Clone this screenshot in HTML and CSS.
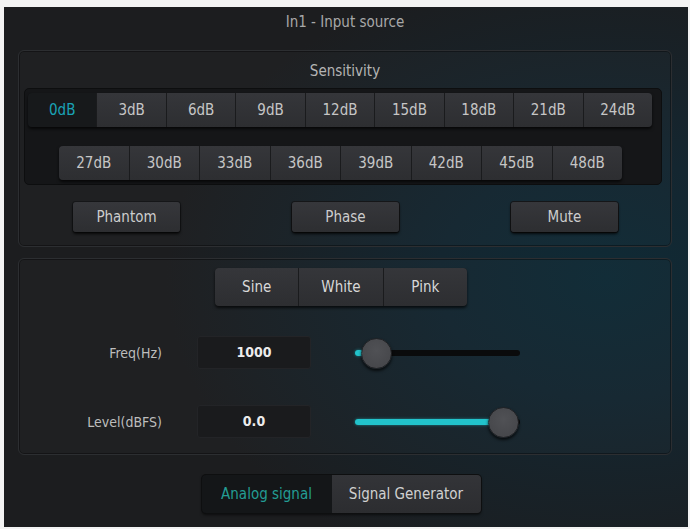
FILE: index.html
```html
<!DOCTYPE html>
<html>
<head>
<meta charset="utf-8">
<link rel="stylesheet" href="styles.css">
</head>
<body>
<div class="panel">
  <div class="title">In1 - Input source</div>
  <div class="group group-top">
    <div class="group-label">Sensitivity</div>
    <div class="sens-box">
      <div class="seg seg-row1">
        <div class="btn sel">0dB</div><div class="btn">3dB</div><div class="btn">6dB</div><div class="btn">9dB</div><div class="btn">12dB</div><div class="btn">15dB</div><div class="btn">18dB</div><div class="btn">21dB</div><div class="btn">24dB</div>
      </div>
      <div class="seg seg-row2">
        <div class="btn">27dB</div><div class="btn">30dB</div><div class="btn">33dB</div><div class="btn">36dB</div><div class="btn">39dB</div><div class="btn">42dB</div><div class="btn">45dB</div><div class="btn">48dB</div>
      </div>
    </div>
    <div class="toggles">
      <div class="tbtn">Phantom</div>
      <div class="tbtn">Phase</div>
      <div class="tbtn">Mute</div>
    </div>
  </div>
  <div class="group group-gen">
    <div class="seg seg-wave">
      <div class="btn wave">Sine</div><div class="btn wave">White</div><div class="btn wave">Pink</div>
    </div>
    <div class="param-row row-freq">
      <div class="plabel">Freq(Hz)</div>
      <div class="pinput">1000</div>
      <div class="slider">
        <div class="fill" style="width:8px"></div>
        <div class="knob" style="left:6px"></div>
      </div>
    </div>
    <div class="param-row row-level">
      <div class="plabel">Level(dBFS)</div>
      <div class="pinput">0.0</div>
      <div class="slider">
        <div class="fill" style="width:146px"></div>
        <div class="knob" style="left:133px"></div>
      </div>
    </div>
  </div>
  <div class="tabs">
    <div class="tab active">Analog signal</div>
    <div class="tab">Signal Generator</div>
  </div>
</div>
</body>
</html>
```
FILE: styles.css
```css
html, body {
  margin: 0;
  padding: 0;
  background: #f3f3f3;
}
body {
  width: 690px;
  height: 529px;
  overflow: hidden;
  font-family: "DejaVu Sans Condensed", "Liberation Sans Narrow", "Liberation Sans", sans-serif;
  font-size: 15px;
  color: #cfcfcf;
}
.panel {
  margin: 7px 0 0 4px;
  width: 684px;
  height: 520px;
  box-sizing: border-box;
  padding: 0 16px 0 14px;
  display: flex;
  flex-direction: column;
  background:
    radial-gradient(ellipse 440px 320px at 88% 52%, #0f2a35 0%, #142630 38%, rgba(28,30,32,0) 100%),
    #1c1d1f;
}
.title {
  height: 43px;
  line-height: 30px;
  text-align: center;
  color: #a8a8a8;
  font-size: 15px;
}
.group {
  border: 1px solid #2c2e31;
  border-radius: 6px;
  background: rgba(255,255,255,0.015);
  box-shadow: inset 0 0 0 1px rgba(0,0,0,0.35);
}
.group-top {
  height: 197px;
  box-sizing: border-box;
  display: flex;
  flex-direction: column;
}
.group-label {
  height: 37px;
  line-height: 40px;
  text-align: center;
  color: #b4b4b4;
  font-size: 15px;
}
.sens-box {
  margin: 0 9px 0 5px;
  height: 97px;
  box-sizing: border-box;
  padding: 4px 0 0 3px;
  background: #151618;
  border: 1px solid #0d0e0f;
  border-radius: 5px;
  display: flex;
  flex-direction: column;
  gap: 19px;
}
.seg {
  display: flex;
  border-radius: 4px;
  background: #121315;
  box-shadow: 0 2px 3px rgba(0,0,0,0.7);
}
.seg-row1 {
  width: 624px;
}
.seg-row2 {
  width: 563px;
  align-self: center;
  margin-left: -8px;
}
.btn {
  flex: 1;
  height: 34px;
  line-height: 34px;
  text-align: center;
  background: linear-gradient(#35363a, #2d2e31);
  border-right: 1px solid #1a1b1d;
  color: #c6c6c6;
}
.btn:first-child { border-radius: 4px 0 0 4px; }
.btn:last-child { border-right: none; border-radius: 0 4px 4px 0; }
.btn.sel {
  background: #17191b;
  color: #1aa3b6;
}
.toggles {
  display: flex;
  justify-content: space-between;
  padding: 0 53px 0 54px;
  margin-top: 17px;
}
.tbtn {
  width: 107px;
  height: 30px;
  line-height: 30px;
  text-align: center;
  background: linear-gradient(#36373b, #2d2e31);
  border-radius: 3px;
  box-shadow: 0 2px 3px rgba(0,0,0,0.8), 0 0 0 1px #161719;
  color: #cdcdcd;
}
.group-gen {
  margin-top: 11px;
  height: 197px;
  box-sizing: border-box;
  padding-top: 9px;
  display: flex;
  flex-direction: column;
}
.seg-wave {
  width: 252px;
  align-self: center;
  margin-left: -8px;
}
.btn.wave {
  height: 38px;
  line-height: 38px;
  color: #d8d8d8;
}
.param-row {
  display: flex;
  align-items: center;
  height: 33px;
}
.row-freq { margin-top: 30px; }
.row-level { margin-top: 36px; }
.plabel {
  width: 143px;
  text-align: right;
  color: #bdbdbd;
  font-size: 14px;
}
.pinput {
  margin-left: 35px;
  width: 114px;
  height: 33px;
  box-sizing: border-box;
  line-height: 31px;
  text-align: center;
  background: #1a1b1d;
  border: 1px solid #232427;
  border-radius: 3px;
  color: #ececec;
  font-weight: bold;
  font-size: 14px;
}
.slider {
  position: relative;
  margin-left: 44px;
  width: 165px;
  height: 6px;
  border-radius: 3px;
  background: #0a0b0c;
}
.fill {
  height: 6px;
  border-radius: 3px;
  background: #22c3cb;
  box-shadow: 0 0 3px rgba(34,195,203,0.6);
}
.knob {
  position: absolute;
  top: -12px;
  width: 29px;
  height: 29px;
  border-radius: 50%;
  background: radial-gradient(circle at 50% 40%, #505155, #434448);
  border: 1px solid #222326;
  box-shadow: 0 2px 3px rgba(0,0,0,0.7);
}
.tabs {
  margin-top: 20px;
  align-self: center;
  margin-left: -8px;
  display: flex;
  height: 38px;
  border-radius: 4px;
  background: #0f1011;
  box-shadow: 0 0 0 1px #0e0f10, 0 2px 3px rgba(0,0,0,0.6);
}
.tab {
  height: 38px;
  line-height: 38px;
  text-align: center;
  font-size: 15px;
}
.tab.active {
  width: 130px;
  background: #141618;
  color: #239d94;
  border-radius: 4px 0 0 4px;
}
.tab:not(.active) {
  width: 149px;
  background: linear-gradient(#333438, #2c2d30);
  color: #d0d0d0;
  border-radius: 0 4px 4px 0;
}
```
